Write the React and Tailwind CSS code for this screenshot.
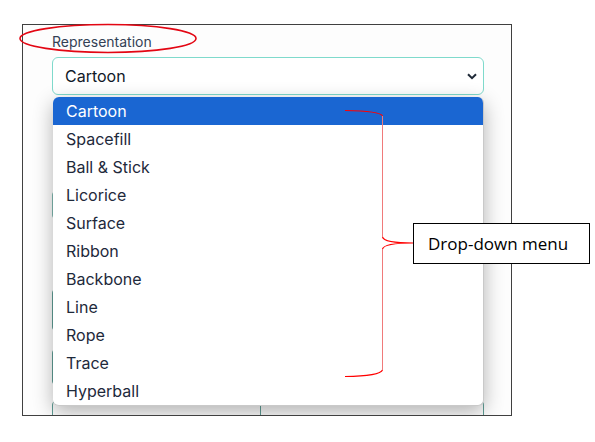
import React from "react";

const items = [
  "Cartoon",
  "Spacefill",
  "Ball & Stick",
  "Licorice",
  "Surface",
  "Ribbon",
  "Backbone",
  "Line",
  "Rope",
  "Trace",
  "Hyperball",
];

export default function App() {
  return (
    <div className="relative w-[595px] h-[442px] bg-white overflow-hidden" style={{ fontFamily: "Inter, 'Noto Sans', sans-serif" }}>
      <div className="ml-[22px] mt-[24px] w-[490px] h-[392px] border border-[#404040] bg-[#fdfdfd] relative overflow-hidden">
        <div className="pl-[29px] pr-[27px] pt-[7px] flex flex-col">
          <div className="text-[14px] leading-[20px] text-[#334155]">Representation</div>
          <div className="mt-[5px] h-[38px] border border-[#7fdacc] rounded-[6px] bg-white flex items-center justify-between pl-[12px] pr-[5px]">
            <span className="text-[16px] text-[#111827]">Cartoon</span>
            <svg width="10" height="7" viewBox="0 0 10 7" className="mr-[1px]">
              <path d="M1 1.2 L5 5.2 L9 1.2" fill="none" stroke="#1f2937" strokeWidth="2" />
            </svg>
          </div>
          {/* underlying content hidden behind dropdown */}
          <div className="mt-[95px] h-[30px] border border-[#7fb8b0] rounded-[5px]" />
          <div className="mt-[68px] h-[44px] border border-[#5f9e96] rounded-[5px]" />
          <div className="mt-[16px] h-[38px] border border-[#5f9e96] rounded-[5px]" />
          <div className="mt-[14px] grid grid-cols-[209px_1fr] gap-0">
            <div className="h-[40px] border border-[#5f9e96] rounded-l-[5px]" />
            <div className="h-[40px] border border-l-0 border-[#5f9e96] rounded-r-[5px]" />
          </div>
        </div>
        <div className="absolute left-[30px] top-[72px] w-[431px] bg-white rounded-[6px] overflow-hidden border-b border-r border-[#c9c9c9] shadow-[0_6px_20px_rgba(0,0,0,0.3)]">
          {items.map((it, i) => (
            <div
              key={it}
              className={
                "h-[28px] flex items-center pl-[13px] text-[16px] " +
                (i === 0 ? "bg-[#1a66d2] text-white" : "text-[#1e293b]")
              }
            >
              {it}
            </div>
          ))}
        </div>
      </div>

      <svg className="absolute left-0 top-0" width="595" height="442" viewBox="0 0 595 442">
        <ellipse cx="108" cy="38.5" rx="88" ry="14" fill="none" stroke="#e30613" strokeWidth="1.6" />
        <path d="M345 110.5 Q380 111 382.5 116 M382.5 237 Q384 243 413 243 Q384 243 382.5 249 M382.5 370 Q380 376 345 376.5" fill="none" stroke="#ff0000" strokeWidth="1.2" />
        <path d="M382.5 116 L382.5 237 M382.5 249 L382.5 370" fill="none" stroke="#f07a7a" strokeWidth="1" />
      </svg>

      <div className="absolute left-[413px] top-[223px] w-[177px] h-[41px] border border-black bg-white flex items-center pl-[14px]">
        <span className="text-[17px] text-black" style={{ fontFamily: "'Open Sans', sans-serif" }}>Drop-down menu</span>
      </div>
    </div>
  );
}
